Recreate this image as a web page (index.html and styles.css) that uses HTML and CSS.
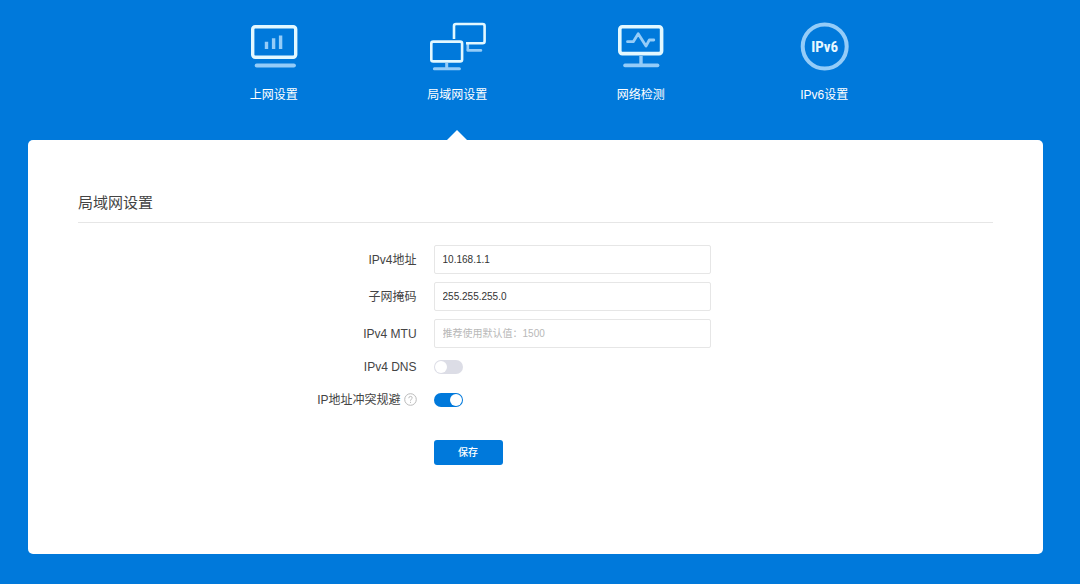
FILE: index.html
```html
<!DOCTYPE html>
<html lang="zh-CN">
<head>
<meta charset="utf-8">
<meta name="viewport" content="width=device-width, initial-scale=1">
<title>局域网设置</title>
<link rel="stylesheet" href="styles.css">
</head>
<body>
<div class="page">
  <nav class="tabs">
    <a class="tab" href="#wan">
      <svg class="tab-icon" viewBox="0 0 60 60" aria-hidden="true">
        <rect class="line" x="8.7" y="9.7" width="43" height="30.5" rx="2.5" stroke-width="3.4"/>
        <path class="soft" d="M22.5 32v-7.3M29.6 32V21.2M36.6 32V18.5" stroke-width="3.4"/>
        <path class="soft round" d="M12.7 48.6h37.2" stroke-width="4"/>
      </svg>
      <span>上网设置</span>
    </a>
    <a class="tab tab-active" href="#lan" aria-current="page">
      <svg class="tab-icon" viewBox="0 0 60 60" aria-hidden="true">
        <path class="soft" d="M40.8 27v6.3" stroke-width="2.6"/>
        <path class="soft round" d="M40.8 33.4h13.1" stroke-width="2.6"/>
        <path class="line" d="M27 22V9q0-2 2-2h26.6q2 0 2 2v15.3q0 2-2 2H39" stroke-width="2.6"/>
        <rect class="line" x="4.3" y="24.6" width="30.8" height="19.8" rx="2" stroke-width="2.6"/>
        <path class="soft" d="M19.7 46v5" stroke-width="3"/>
        <path class="soft round" d="M7.4 51.7h25" stroke-width="3"/>
      </svg>
      <span>局域网设置</span>
    </a>
    <a class="tab" href="#detect">
      <svg class="tab-icon" viewBox="0 0 60 60" aria-hidden="true">
        <path class="soft" d="M30 39v9" stroke-width="3.4"/>
        <rect class="line" x="8.8" y="9.8" width="41.8" height="26.8" rx="2.5" stroke-width="3.6"/>
        <path class="soft round" d="M16.5 24.7h5.8l4.9-8 7.8 12.4 3.3-6.1h4.5" stroke-width="2.8"/>
        <path class="soft round" d="M14 48.4h32.6" stroke-width="3.6"/>
      </svg>
      <span>网络检测</span>
    </a>
    <a class="tab" href="#ipv6">
      <svg class="tab-icon" viewBox="0 0 60 60" aria-hidden="true">
        <circle class="soft" cx="30.7" cy="29.5" r="22" stroke-width="4"/>
        <text class="badge-text" x="30.7" y="35" text-anchor="middle">IPv6</text>
      </svg>
      <span>IPv6设置</span>
    </a>
  </nav>

  <main class="panel">
    <h1 class="title">局域网设置</h1>
    <form class="form">
      <div class="row">
        <label class="label" for="ip">IPv4地址</label>
        <input class="field" id="ip" type="text" value="10.168.1.1">
      </div>
      <div class="row">
        <label class="label" for="mask">子网掩码</label>
        <input class="field" id="mask" type="text" value="255.255.255.0">
      </div>
      <div class="row">
        <label class="label" for="mtu">IPv4 MTU</label>
        <input class="field" id="mtu" type="text" placeholder="推荐使用默认值：1500">
      </div>
      <div class="row row-switch">
        <label class="label" for="dns">IPv4 DNS</label>
        <input class="switch" id="dns" type="checkbox" role="switch">
      </div>
      <div class="row row-switch row-spaced">
        <label class="label" for="conflict">IP地址冲突规避
          <svg class="help" viewBox="0 0 13 13" aria-hidden="true">
            <circle cx="6.5" cy="6.5" r="5.8"/>
            <path d="M4.8 5.2q0-1.8 1.7-1.8t1.7 1.5c0 1.3-1.7 1.3-1.7 2.8M6.5 8.8v1.1"/>
          </svg>
        </label>
        <input class="switch" id="conflict" type="checkbox" role="switch" checked>
      </div>
      <div class="row row-action">
        <button class="save" type="button">保存</button>
      </div>
    </form>
  </main>
</div>
</body>
</html>
```
FILE: styles.css
```css
* {
  box-sizing: border-box;
}

body {
  margin: 0;
  background: #0079db;
  color: #444;
  font: 12px/18px "Liberation Sans", "Noto Sans CJK SC", sans-serif;
}

.page {
  display: flex;
  flex-direction: column;
  min-height: 100vh;
  padding: 0 37px 30px 28px;
}

.tabs {
  display: grid;
  grid-template-columns: repeat(4, 1fr);
  padding: 0 127px 0 154px;
}

.tab {
  position: relative;
  display: flex;
  flex-direction: column;
  align-items: center;
  gap: 9px;
  padding: 17px 0 36px;
  color: #fff;
  text-decoration: none;
}

.tab-active::after {
  content: "";
  position: absolute;
  bottom: 0;
  left: 50%;
  margin-left: -10px;
  border: 10px solid transparent;
  border-top: 0;
  border-bottom-color: #fff;
}

.tab-icon {
  width: 60px;
  height: 60px;
  fill: none;
}

.line {
  stroke: #e2f8ff;
}

.soft {
  stroke: #94ccf8;
}

.round {
  stroke-linecap: round;
  stroke-linejoin: round;
}

.badge-text {
  fill: #e8f8ff;
  font: bold 15px "Liberation Sans Narrow", "Roboto Condensed", "DejaVu Sans Condensed", sans-serif;
}

.panel {
  flex: 1;
  padding: 50px;
  border-radius: 5px;
  background: #fff;
}

.title {
  margin: 0;
  padding: 1px 0 7px;
  border-bottom: 1px solid #e6e6e6;
  font-size: 15px;
  line-height: 24px;
  font-weight: 400;
}

.form {
  display: flex;
  flex-direction: column;
  gap: 8px;
  padding-top: 22px;
}

.row {
  display: grid;
  grid-template-columns: 37% minmax(0, 277px);
  column-gap: 17px;
  align-items: center;
}

.row-switch {
  min-height: 21px;
}

.row-spaced {
  margin-top: 4px;
}

.row-action {
  margin-top: 22px;
}

.label {
  display: flex;
  align-items: center;
  justify-content: flex-end;
  gap: 3px;
}

.help {
  width: 13px;
  height: 13px;
  fill: none;
  stroke: #bbb;
  stroke-width: 1;
}

.field {
  width: 100%;
  height: 29px;
  padding: 0 8px;
  border: 1px solid #e6e6e6;
  border-radius: 2px;
  background: #fff;
  color: #333;
  font: inherit;
  font-size: 10px;
}

.field::placeholder {
  color: #b8b8b8;
  opacity: 1;
}

.switch {
  display: flex;
  appearance: none;
  width: 29px;
  height: 14px;
  margin: 0;
  padding: 1px;
  border-radius: 7px;
  background: #dcdde6;
}

.switch::before {
  content: "";
  width: 12px;
  height: 12px;
  border-radius: 50%;
  background: #fff;
}

.switch:checked {
  justify-content: flex-end;
  background: #0079db;
}

.save {
  grid-column: 2;
  width: 69px;
  height: 25px;
  padding: 0;
  border: 0;
  border-radius: 3px;
  background: #0079db;
  color: #fff;
  font: inherit;
  font-size: 10px;
  font-weight: 500;
}
```
